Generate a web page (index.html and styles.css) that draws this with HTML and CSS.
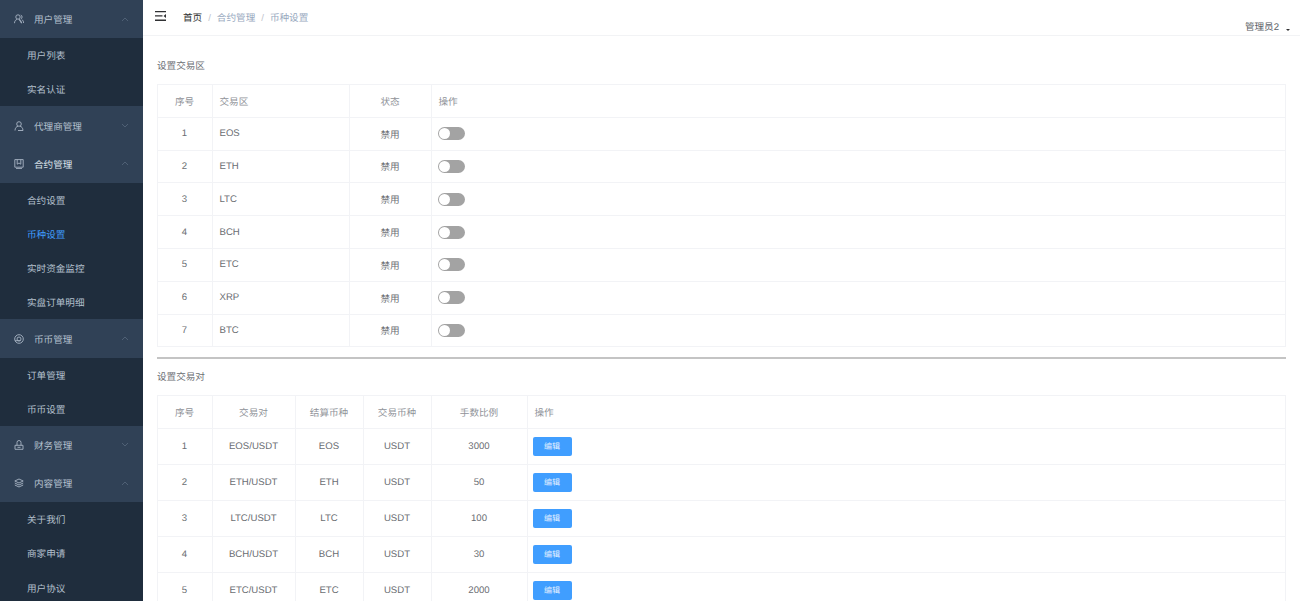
FILE: index.html
```html
<!DOCTYPE html>
<html lang="zh">
<head>
<meta charset="utf-8">
<title>币种设置</title>
<link rel="stylesheet" href="styles.css">
</head>
<body>
<div class="app">
  <aside class="sidebar">
    <div class="menu-head"><svg class="mi" viewBox="0 0 10 10"><circle cx="4" cy="3" r="2.200"/><path d="M.5 9.200c0-2.200 1.200-3.400 2.500-3.800M5 5.400c1.300.4 2.500 1.600 2.500 3.800zM6.800 1a2.200 2.200 0 0 1 0 4M7.800 5.600c1 .5 1.800 1.700 1.800 3.400"/></svg><span class="mt">用户管理</span><svg class="chev" viewBox="0 0 8 5"><path d="M1 4l3-3 3 3"/></svg></div>
    <div class="sub"><div class="sub-item">用户列表</div><div class="sub-item">实名认证</div></div>
    <div class="menu-head"><svg class="mi" viewBox="0 0 10 10"><circle cx="5" cy="3" r="2.300"/><path d="M1 9.500c0-2.500 1.500-4 3-4.300M6 5.200c1.500.3 3 1.800 3 4.300H4"/></svg><span class="mt">代理商管理</span><svg class="chev" viewBox="0 0 8 5"><path d="M1 1l3 3 3-3"/></svg></div>
    <div class="menu-head"><svg class="mi" viewBox="0 0 10 10"><path d="M.8.600h8.400v7.600H.8zM3.200.600v4.600L5 4l1.800 1.200V.6M2 9.600h6"/></svg><span class="mt current">合约管理</span><svg class="chev" viewBox="0 0 8 5"><path d="M1 4l3-3 3 3"/></svg></div>
    <div class="sub"><div class="sub-item">合约设置</div><div class="sub-item active">币种设置</div><div class="sub-item">实时资金监控</div><div class="sub-item">实盘订单明细</div></div>
    <div class="menu-head"><svg class="mi" viewBox="0 0 10 10"><circle cx="5" cy="5" r="4.300"/><circle cx="5" cy="5" r="2"/><path d="M1 6.700h5.500"/></svg><span class="mt">币币管理</span><svg class="chev" viewBox="0 0 8 5"><path d="M1 4l3-3 3 3"/></svg></div>
    <div class="sub"><div class="sub-item">订单管理</div><div class="sub-item">币币设置</div></div>
    <div class="menu-head"><svg class="mi" viewBox="0 0 10 10"><path d="M1 9.300h8V5.300H1zM3 5.300V2.500a2 2 0 0 1 4 0v2.800M3.500 7.300h3"/></svg><span class="mt">财务管理</span><svg class="chev" viewBox="0 0 8 5"><path d="M1 1l3 3 3-3"/></svg></div>
    <div class="menu-head"><svg class="mi" viewBox="0 0 10 10"><path d="M5 1l4.200 2L5 5 .8 3zM.8 5L5 7l4.200-2M.8 7L5 9l4.200-2"/></svg><span class="mt">内容管理</span><svg class="chev" viewBox="0 0 8 5"><path d="M1 4l3-3 3 3"/></svg></div>
    <div class="sub"><div class="sub-item">关于我们</div><div class="sub-item">商家申请</div><div class="sub-item">用户协议</div></div>
  </aside>
  <main class="main">
    <header class="topbar">
      <svg class="hamb" viewBox="0 0 11 10"><path d="M0 0h11v1.300H0zM0 4.300h7.500v1.300H0zM0 8.600h11V10H0zM11 3v4L8.500 5z"/></svg>
      <nav class="crumbs"><span class="c-first">首页</span><span class="c-sep">/</span><span>合约管理</span><span class="c-sep">/</span><span>币种设置</span></nav>
      <div class="user">管理员2<span class="caret"></span></div>
    </header>
    <section class="content">
      <h2 class="title first">设置交易区</h2>
      <table class="grid zone">
        <colgroup><col class="z1"><col class="z2"><col class="z3"><col></colgroup>
        <thead><tr><th class="ctr">序号</th><th>交易区</th><th class="ctr">状态</th><th>操作</th></tr></thead>
        <tbody>
          <tr><td class="ctr">1</td><td>EOS</td><td class="ctr">禁用</td><td><span class="switch"></span></td></tr>
          <tr><td class="ctr">2</td><td>ETH</td><td class="ctr">禁用</td><td><span class="switch"></span></td></tr>
          <tr><td class="ctr">3</td><td>LTC</td><td class="ctr">禁用</td><td><span class="switch"></span></td></tr>
          <tr><td class="ctr">4</td><td>BCH</td><td class="ctr">禁用</td><td><span class="switch"></span></td></tr>
          <tr><td class="ctr">5</td><td>ETC</td><td class="ctr">禁用</td><td><span class="switch"></span></td></tr>
          <tr><td class="ctr">6</td><td>XRP</td><td class="ctr">禁用</td><td><span class="switch"></span></td></tr>
          <tr><td class="ctr">7</td><td>BTC</td><td class="ctr">禁用</td><td><span class="switch"></span></td></tr>
        </tbody>
      </table>
      <hr class="rule">
      <h2 class="title">设置交易对</h2>
      <table class="grid pair">
        <colgroup><col class="p1"><col class="p2"><col class="p3"><col class="p4"><col class="p5"><col></colgroup>
        <thead><tr><th class="ctr">序号</th><th class="ctr">交易对</th><th class="ctr">结算币种</th><th class="ctr">交易币种</th><th class="ctr">手数比例</th><th>操作</th></tr></thead>
        <tbody>
          <tr><td class="ctr">1</td><td class="ctr">EOS/USDT</td><td class="ctr">EOS</td><td class="ctr">USDT</td><td class="ctr">3000</td><td><span class="btn">编辑</span></td></tr>
          <tr><td class="ctr">2</td><td class="ctr">ETH/USDT</td><td class="ctr">ETH</td><td class="ctr">USDT</td><td class="ctr">50</td><td><span class="btn">编辑</span></td></tr>
          <tr><td class="ctr">3</td><td class="ctr">LTC/USDT</td><td class="ctr">LTC</td><td class="ctr">USDT</td><td class="ctr">100</td><td><span class="btn">编辑</span></td></tr>
          <tr><td class="ctr">4</td><td class="ctr">BCH/USDT</td><td class="ctr">BCH</td><td class="ctr">USDT</td><td class="ctr">30</td><td><span class="btn">编辑</span></td></tr>
          <tr><td class="ctr">5</td><td class="ctr">ETC/USDT</td><td class="ctr">ETC</td><td class="ctr">USDT</td><td class="ctr">2000</td><td><span class="btn">编辑</span></td></tr>
        </tbody>
      </table>
    </section>
  </main>
</div>
</body>
</html>
```
FILE: styles.css
```css
* { box-sizing: border-box; }
html, body { margin: 0; height: 601px; overflow: hidden; background: #fff; }
body { font-family: "Liberation Sans", "Noto Sans CJK SC", sans-serif; font-size: 9.600px; color: #6b6e73; text-rendering: geometricPrecision; }
.app { display: flex; height: 601px; }

.sidebar { flex: 0 0 143px; background: #1f2d3d; overflow: hidden; color: #b4c0ce; }
.menu-head { height: 38.200px; display: flex; align-items: center; padding-left: 14px; background: #304156; }
.mi { width: 10px; height: 10px; flex: none; fill: none; stroke: #a9b6c5; stroke-width: .9; }
.mt { margin-left: 10px; flex: 1; }
.mt.current { color: #dde4ec; }
.chev { width: 8px; height: 5px; margin-right: 14px; fill: none; stroke: #4f6075; stroke-width: 1; flex: none; }
.sub-item { height: 34.150px; line-height: 34.150px; padding: 2px 0 0 27px; overflow: hidden; background: #1f2d3d; }
.sub-item.active { color: #409eff; }

.main { flex: 1; min-width: 0; }
.topbar { height: 36px; position: relative; display: flex; align-items: flex-start; padding: 11px 0 0 12px; border-bottom: 1px solid #f2f3f5; }
.hamb { width: 11px; height: 10px; fill: #303133; flex: none; }
.crumbs { margin: 2px 0 0 17px; line-height: 11px; color: #97a8be; display: flex; }
.c-first { color: #303133; }
.c-sep { margin: 0 6px; color: #c0c4cc; }
.user { position: absolute; right: 10px; top: 22px; line-height: 12px; color: #5a5e66; display: flex; align-items: center; }
.caret { width: 0; height: 0; margin: 3px 0 0 7px; border: 2.500px solid transparent; border-top-color: #303133; border-bottom: 0; }

.content { padding: 0 14px; }
.title { margin: 0; font-size: 9.600px; font-weight: 400; line-height: 12px; color: #6b6e73; }
.title.first { margin-top: 25px; margin-bottom: 11px; }
.title:not(.first) { margin-bottom: 11px; }
.grid { width: 1129px; border-collapse: collapse; table-layout: fixed; }
.grid th, .grid td { border: 1px solid #f2f3f6; padding: 0 6.500px; font-weight: 400; text-align: left; }
.grid th { color: #909399; }
.grid .ctr { text-align: center; padding-right: 7.500px; }
.zone tr { height: 32.800px; }
.pair thead tr { height: 33px; }
.pair tbody tr { height: 36px; }
.pair td.ctr { padding-top: 1px; }
.z1, .p1 { width: 55px; }
.z2 { width: 137px; }
.z3 { width: 82px; }
.p2 { width: 83px; }
.p3, .p4 { width: 68px; }
.p5 { width: 96px; }
.switch { display: block; width: 27px; height: 13px; margin-left: -1px; border-radius: 7px; background: #a3a3a3; position: relative; }
.switch::after { content: ""; position: absolute; left: 1px; top: 1px; width: 11px; height: 11px; border-radius: 50%; background: #fff; }
.btn { display: block; width: 39px; height: 19px; margin-left: -2px; line-height: 19px; text-align: center; border-radius: 2px; background: #409eff; color: #e6f2ff; font-size: 8px; }
.rule { height: 1.500px; margin: 10px 0 13px; border: 0; background: #c4c4c4; }
```
